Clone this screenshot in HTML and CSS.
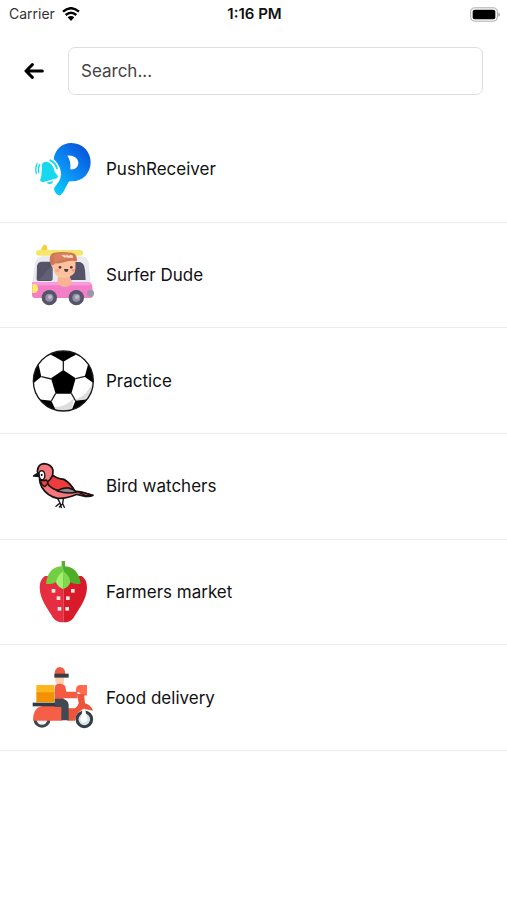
FILE: index.html
```html
<!DOCTYPE html>
<html lang="en">
<head>
    <meta charset="utf-8">
    <meta name="viewport" content="width=device-width, initial-scale=1">
    <title>Channels</title>
    <link rel="stylesheet" href="styles.css">
</head>

<body>
<div class="status_bar">
    <div class="carrier">
        <span>Carrier</span>
        <svg class="wifi" viewBox="0 0 54 42" aria-hidden="true">
            <path d="M3 14Q27-7 51 14" fill="none" stroke="#000" stroke-width="7"/>
            <path d="M11 24Q27 10 43 24" fill="none" stroke="#000" stroke-width="7"/>
            <path d="M17 31Q27 23 37 31L27 42z"/>
        </svg>
    </div>
    <div class="time">1:16 PM</div>
    <div class="battery">
        <svg viewBox="0 0 90 44" aria-hidden="true">
            <rect x="2" y="2" width="80" height="40" rx="12" fill="#fff" stroke="#aaa" stroke-width="3"/>
            <rect x="8" y="8" width="68" height="28" rx="6"/>
            <path d="M85 15q5 2 5 7t-5 7z" fill="#aaa"/>
        </svg>
    </div>
</div>

<form class="search" role="search">
    <button class="back" type="button" aria-label="Back">
        <svg viewBox="0 0 60 48" fill="none" stroke="#000" stroke-width="9" stroke-linecap="round" stroke-linejoin="round" aria-hidden="true">
            <path d="M25 5L6 24L25 43M7 24H55"/>
        </svg>
    </button>
    <input class="search_input" type="text" placeholder="Search..." aria-label="Search">
</form>

<ul class="channel_list">
    <li class="channel">
        <svg class="channel_icon" viewBox="36 24 186 186" aria-hidden="true">
            <defs>
                <linearGradient id="push" gradientUnits="userSpaceOnUse" x1="105" y1="180" x2="210" y2="70">
                    <stop offset="0" stop-color="#08c8f8"/>
                    <stop offset=".5" stop-color="#0b8bf4"/>
                    <stop offset="1" stop-color="#0757dc"/>
                </linearGradient>
            </defs>
            <path fill="url(#push)" fill-rule="evenodd" d="M101 88C104 59 126 39 154 39C187 39 212 64 212 97C212 130 188 154 157 154C151 154 147 153 144 159C136 174 130 190 122 195C117 199 109 193 104 184C101 179 102 174 106 169C115 158 122 148 123 135C124 115 112 97 101 88zM142 77Q153 91 151 118C166 120 175 110 175 98C174 84 160 75 142 77z"/>
            <path fill="#18d8f0" d="M66 103C69 95 79 93 88 98C97 103 101 111 104 125L114 139L111 145L68 157L60 152L64 138Q66 116 66 103z"/>
            <path fill="#18d8f0" d="M80 158L99 153Q99 161 89 162Q82 162 80 158z"/>
            <g fill="none" stroke="#18d8f0" stroke-width="5" stroke-linecap="round">
                <path d="M59 104Q53 114 56 128M51 101Q45 114 49 131" stroke-width="4"/>
                <path d="M91 91Q106 97 111 115" stroke-width="6"/>
            </g>
        </svg>
        <span class="channel_name">PushReceiver</span>
    </li>
    <li class="channel">
        <svg class="channel_icon" viewBox="36 24 186 186" aria-hidden="true">
            <rect x="48" y="42" width="141" height="17" rx="8" fill="#f6e66c"/>
            <path d="M62 42L72 25L81 30L82 43z" fill="#f4cf3f"/>
            <path d="M37 140L45 82Q49 61 66 61H184Q202 61 206 79L212 140z" fill="#e9e9ee"/>
            <path d="M51 89Q54 77 65 77H92Q98 77 98 86V127Q98 135 91 135H56Q49 135 50 126z" fill="#565369"/>
            <path d="M56 132L96 88V126Q96 133 90 133z" fill="#625f76"/>
            <path d="M162 78H180Q193 81 195 103L197 132H144V120z" fill="#565369"/>
            <path d="M36 139H207Q216 140 217 154L219 180Q218 186 207 186H42Q36 185 36 176z" fill="#f47fc9"/>
            <path d="M36 139H210L213 148H37z" fill="#f99bdc"/>
            <path d="M112 136Q114 121 119 110H148Q148 125 155 134Q157 151 134 153Q117 152 112 136z" fill="#f7b393"/>
            <path d="M100 74Q89 77 94 89Q97 96 101 96Q101 117 119 124Q147 130 163 111Q168 101 166 70z" fill="#ffc29f"/>
            <path d="M90 77Q86 58 99 51Q123 46 155 50Q173 53 171 76Q158 72 136 77Q118 84 105 82Q98 93 92 83z" fill="#cf7657"/>
            <path d="M101 56Q120 49 148 51L159 65Q132 70 104 79z" fill="#dc8969" opacity=".6"/>
            <path d="M124 58l8-2 4 3 4-3 6 3 6-3 7 3-1 8-8-2-6 1-4-3-6 2z" fill="#ffd7c3"/>
            <circle cx="120" cy="94" r="4" fill="#493d42"/>
            <circle cx="154" cy="94" r="4" fill="#493d42"/>
            <path d="M132 99h13q0 9-6 9t-7-9z" fill="#493d42"/>
            <ellipse cx="112" cy="103" rx="7" ry="5" fill="#ffa28d"/>
            <ellipse cx="160" cy="103" rx="5" ry="4" fill="#ff927f"/>
            <path d="M37 145H46Q54 147 54 158Q53 170 43 171H37z" fill="#ffed68"/>
            <rect x="201" y="162" width="21" height="20" rx="9" fill="#9998a8"/>
            <circle cx="88" cy="185" r="23" fill="#555468"/>
            <circle cx="88" cy="185" r="12" fill="#9392a2"/>
            <circle cx="90" cy="183" r="6" fill="#bebdca"/>
            <circle cx="169" cy="185" r="23" fill="#555468"/>
            <circle cx="169" cy="185" r="12" fill="#9392a2"/>
            <circle cx="171" cy="183" r="6" fill="#bebdca"/>
        </svg>
        <span class="channel_name">Surfer Dude</span>
    </li>
    <li class="channel">
        <svg class="channel_icon" viewBox="36 22 186 186" aria-hidden="true">
            <defs>
                <clipPath id="ball"><circle cx="130" cy="115" r="90"/></clipPath>
            </defs>
            <circle cx="130" cy="115" r="90" fill="#fff"/>
            <g clip-path="url(#ball)">
                <path d="M221 112Q204 159 164 172L168 184L221 181z" fill="#ddd"/>
                <path d="M96 193Q134 196 162 166L154 208H108z" fill="#ddd"/>
                <path d="M130 82L167 107L154 153H107L93 107z"/>
                <path d="M92 36L107 23H153L168 36L153 44L130 57L107 44z"/>
                <path d="M56 66L64 102L40 122L34 111L43 75z"/>
                <path d="M204 66L194 102L221 122L227 110L214 72z"/>
                <path d="M54 170L94 174L108 204L90 207L60 183z"/>
                <path d="M166 174L206 170L189 194L154 205z"/>
                <path d="M130 55V84M64 102L94 109M167 108L195 101M107 152L94 175M154 152L167 175" fill="none" stroke="#222" stroke-width="4"/>
            </g>
            <circle cx="130" cy="115" r="90" fill="none" stroke="#171717" stroke-width="4"/>
        </svg>
        <span class="channel_name">Practice</span>
    </li>
    <li class="channel">
        <svg class="channel_icon" viewBox="36 23 186 186" stroke="#151313" stroke-width="5" stroke-linecap="round" stroke-linejoin="round" aria-hidden="true">
            <path d="M52 72Q54 50 72 49Q94 51 99 68L98 84Q111 94 133 97Q152 108 164 131L185 134L219 144Q211 149 196 147L171 141Q139 155 113 153Q82 147 65 119Q57 103 59 91z" fill="#f5777c"/>
            <path d="M80 106Q92 97 98 84Q111 94 133 97Q150 107 162 128L145 122Q127 122 114 130Q91 123 80 106z" fill="#ee3d3d"/>
            <path d="M61 98Q70 101 80 98L84 108L75 118Q64 114 61 98z" fill="#ee3d3d" stroke-width="4"/>
            <path d="M112 131Q125 121 145 122Q161 126 170 134Q145 141 112 131z" fill="#8d8791"/>
            <path d="M174 134L190 136L217 144L196 145z" fill="#ee3d3d" stroke-width="4"/>
            <path d="M57 76Q62 67 71 72Q79 86 70 97Q60 99 58 87z" fill="#fff" stroke-width="4"/>
            <path d="M55 77L41 86L56 87z" fill="#151313"/>
            <path d="M65 82v1" stroke-width="6"/>
            <path d="M113 153L120 167L108 177M120 167L124 181M130 153L128 169L118 179M128 169L133 180" fill="none" stroke-width="4"/>
        </svg>
        <span class="channel_name">Bird watchers</span>
    </li>
    <li class="channel">
        <svg class="channel_icon" viewBox="36 27 186 186" aria-hidden="true">
            <path d="M130 72H75Q59 82 59 108C60 145 88 177 99 197Q109 211 130 211z" fill="#e52e40"/>
            <path d="M130 72H185Q201 82 201 108C200 145 172 177 161 197Q151 211 130 211z" fill="#d91a2a"/>
            <rect x="125" y="27" width="10" height="25" fill="#58ae35"/>
            <path d="M130 43Q84 42 78 95Q97 99 108 90Q113 105 130 111z" fill="#72cf43"/>
            <path d="M130 43Q175 43 182 95Q163 99 151 90Q147 105 130 111z" fill="#4dae29"/>
            <path d="M130 58Q111 71 108 90Q113 105 130 111z" fill="#a3ef70"/>
            <path d="M130 58Q149 71 151 90Q147 105 130 111z" fill="#80d84c"/>
            <g fill="#fce5e3">
                <rect x="95" y="111" width="11" height="11"/>
                <rect x="153" y="111" width="11" height="11"/>
                <rect x="110" y="133" width="11" height="11"/>
                <rect x="138" y="133" width="11" height="11"/>
                <rect x="113" y="165" width="11" height="11"/>
                <rect x="136" y="165" width="11" height="11"/>
            </g>
        </svg>
        <span class="channel_name">Farmers market</span>
    </li>
    <li class="channel">
        <svg class="channel_icon" viewBox="36 27 186 186" aria-hidden="true">
            <path d="M49 81H103V107H49z" fill="#ffb51f"/>
            <path d="M49 103H103V133H49z" fill="#f39200"/>
            <circle cx="66" cy="184" r="21" fill="#f5f5f5" stroke="#3e464c" stroke-width="9"/>
            <path d="M106 58H132V71Q132 80 121 81Q108 80 106 71z" fill="#ffd0ad"/>
            <path d="M104 48Q104 28 120 27Q136 29 136 48z" fill="#f15a42"/>
            <rect x="103" y="47" width="43" height="12" fill="#353e44"/>
            <path d="M106 82Q114 75 128 79Q137 82 137 91L139 101H172V121H133L125 125H104V95z" fill="#f35b42"/>
            <path d="M168 93Q169 81 181 81H201V112L188 114L177 103H168z" fill="#ff6a50"/>
            <path d="M171 108H192L195 136Q212 140 219 158L205 155Q184 148 169 172L165 188H142V151H165Q174 146 176 135z" fill="#ec543c"/>
            <path d="M39 188Q39 147 69 144H127V188z" fill="#f65f46"/>
            <rect x="38" y="134" width="70" height="11" fill="#333c42"/>
            <path d="M104 122H129Q145 126 146 140V187H124V147H104z" fill="#414a52"/>
            <circle cx="193" cy="184" r="22" fill="#d7e2e9" stroke="#343d45" stroke-width="9"/>
            <path d="M188 153L195 152L202 184Q201 194 191 194Q182 193 182 184z" fill="#fff"/>
        </svg>
        <span class="channel_name">Food delivery</span>
    </li>
</ul>
</body>
</html>
```
FILE: styles.css
```css
*{box-sizing: border-box;}
body{margin: 0;background: #fff;color: #111;font-family: Inter, "Liberation Sans", sans-serif;}
.status_bar{display: grid;grid-template-columns: 1fr auto 1fr;align-items: center;height: 28px;padding: 0 7px 0 9px;font-size: 14px;line-height: 20px;}
.carrier{display: flex;align-items: center;gap: 7px;color: #333;}
.wifi{width: 18px;height: 14px;}
.time{font-size: 15px;font-weight: 600;}
.battery{display: flex;justify-content: flex-end;}
.battery svg{width: 30px;height: 15px;}
.search{display: flex;align-items: center;padding: 19px 24px 22px;}
.back{display: flex;align-items: center;width: 44px;height: 44px;padding: 0;border: 0;background: none;cursor: pointer;}
.back svg{width: 20px;height: 16px;}
.search_input{flex: 1;min-width: 0;height: 48px;padding: 0 12px;border: 1px solid #dedede;border-radius: 7px;background: #fff;color: #444;font: inherit;font-size: 17px;}
.search_input::placeholder{color: #444;opacity: 1;}
.channel_list{display: grid;grid-auto-rows: 1fr;min-height: 634px;margin: 0;padding: 0;list-style: none;}
.channel{display: flex;align-items: center;gap: 12px;padding: 0 32px;border-bottom: 1px solid #ececec;}
.channel_icon{flex: none;width: 62px;height: 62px;}
.channel_name{font-size: 17px;line-height: 24px;}
```
